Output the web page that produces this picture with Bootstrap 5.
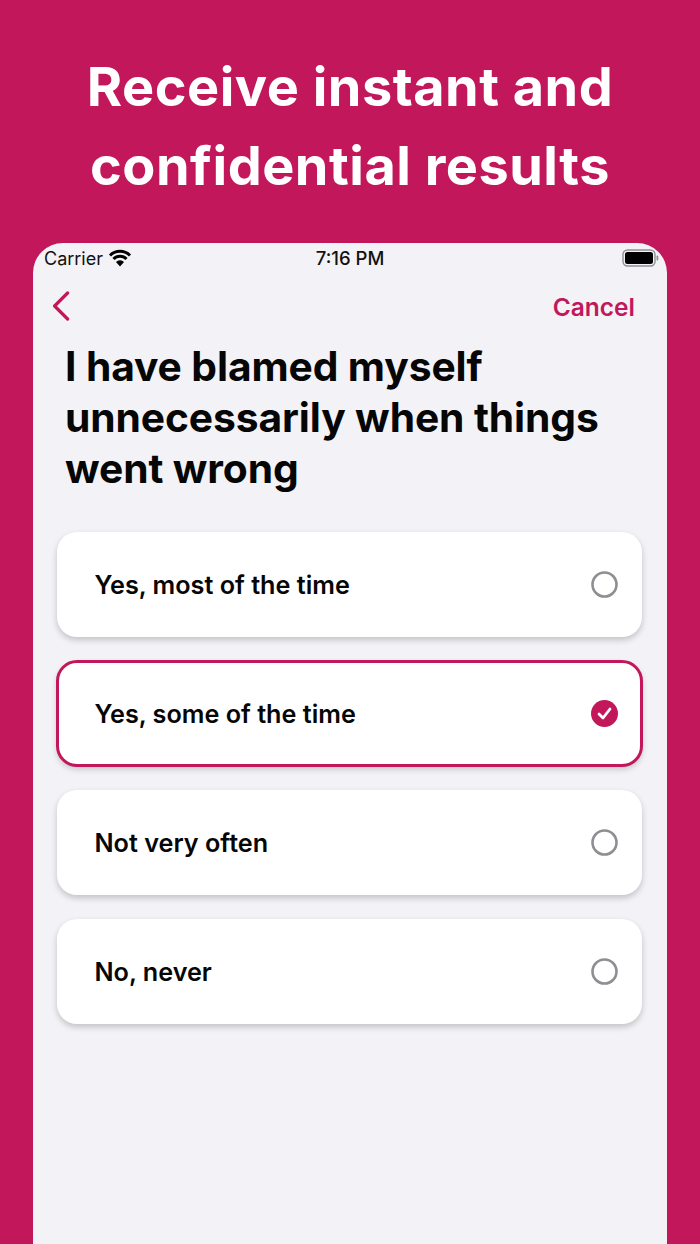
<!DOCTYPE html>
<html lang="en">
<head>
<meta charset="utf-8">
<title>Results</title>
<link href="https://cdn.jsdelivr.net/npm/bootstrap@5.3.0/dist/css/bootstrap.min.css" rel="stylesheet">
<style>
html,body{height:100%;}
body{background:#c2185b;font-family:"Inter","Liberation Sans",sans-serif;overflow:hidden;}
.stage{height:1244px;}
.headline{height:243px;padding-top:47px;color:#fff;font-size:54px;font-weight:700;line-height:79px;letter-spacing:.5px;}
.phone{margin:0 33px;background:#f2f2f7;border-radius:30px 30px 0 0;}
.statusline{height:30px;padding:0 8px 0 11px;font-size:18px;color:#111;}
.statusline .clock{font-size:18.5px;font-weight:500;padding-top:2px;}
.wifimark{margin-left:-3px;}
.navline{height:68px;padding:0 32px 0 19px;}
.backmark{margin-top:-2px;}
.cancel{color:#c2185b;font-size:24.5px;font-weight:600;padding-top:1px;}
.question{margin:0;padding:0 32px;font-size:40.75px;font-weight:700;line-height:51px;color:#060606;letter-spacing:-.1px;}
.answers{padding:38px 25px 0 24px;gap:24px;}
.answer{height:105px;background:#fff;border-radius:20px;padding:3px 24px 0 37.5px;box-shadow:0 3px 6px rgba(0,0,0,.2);font-size:25.2px;font-weight:560;color:#060606;}
.answer.picked{outline:3px solid #c2185b;outline-offset:-2px;}
.dot{width:27px;height:27px;display:block;margin-top:-3px;}
</style>
</head>
<body>
<div class="stage d-flex flex-column">
  <div class="headline text-center">Receive instant and<br>confidential results</div>
  <div class="phone flex-grow-1">
    <div class="statusline d-flex align-items-center justify-content-between position-relative">
      <div class="d-flex align-items-center gap-2">
        <span>Carrier</span>
        <svg class="wifimark" width="24" height="18" viewBox="0 0 24 18"><path d="M2 6.5a14 14 0 0 1 20 0M5.5 10a9 9 0 0 1 13 0" fill="none" stroke="#000" stroke-width="3"/><path d="M8 13a5.5 5.5 0 0 1 8 0l-4 4.5z" fill="#000"/></svg>
      </div>
      <span class="clock position-absolute top-50 start-50 translate-middle">7:16 PM</span>
      <svg width="37" height="18" viewBox="0 0 37 18"><rect x="1" y="1" width="32" height="16" rx="4.5" fill="none" stroke="#8e8e93" stroke-width="1.4"/><rect x="3" y="3" width="28" height="12" rx="2.5" fill="#000"/><rect x="34.5" y="6.5" width="1.8" height="5" rx=".9" fill="#8e8e93"/></svg>
    </div>
    <div class="navline d-flex align-items-center justify-content-between">
      <svg class="backmark" width="20" height="30" viewBox="0 0 20 30"><path d="M15.6 2 2.6 15l13 13" fill="none" stroke="#c2185b" stroke-width="3.2" stroke-linecap="round" stroke-linejoin="round"/></svg>
      <span class="cancel">Cancel</span>
    </div>
    <h1 class="question">I have blamed myself unnecessarily when things went wrong</h1>
    <div class="answers d-flex flex-column">
      <div class="answer d-flex align-items-center justify-content-between"><span>Yes, most of the time</span>
        <svg class="dot" viewBox="0 0 27 27"><circle cx="13.5" cy="13.5" r="12" fill="none" stroke="#8e8e93" stroke-width="2.6"/></svg></div>
      <div class="answer picked d-flex align-items-center justify-content-between"><span>Yes, some of the time</span>
        <svg class="dot" viewBox="0 0 27 27"><circle cx="13.5" cy="13.5" r="13.5" fill="#c2185b"/><path d="m8 14 4 4 7-9" fill="none" stroke="#fff" stroke-width="2.8" stroke-linecap="round" stroke-linejoin="round"/></svg></div>
      <div class="answer d-flex align-items-center justify-content-between"><span>Not very often</span>
        <svg class="dot" viewBox="0 0 27 27"><circle cx="13.5" cy="13.5" r="12" fill="none" stroke="#8e8e93" stroke-width="2.6"/></svg></div>
      <div class="answer d-flex align-items-center justify-content-between"><span>No, never</span>
        <svg class="dot" viewBox="0 0 27 27"><circle cx="13.5" cy="13.5" r="12" fill="none" stroke="#8e8e93" stroke-width="2.6"/></svg></div>
    </div>
  </div>
</div>
<script src="https://cdn.jsdelivr.net/npm/bootstrap@5.3.0/dist/js/bootstrap.bundle.min.js"></script>
</body>
</html>
